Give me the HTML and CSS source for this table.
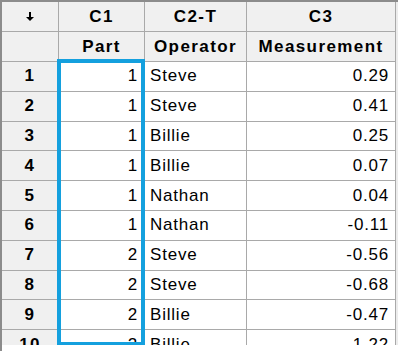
FILE: index.html
```html
<!DOCTYPE html>
<html>
<head>
<meta charset="utf-8">
<link rel="stylesheet" href="styles.css">
</head>
<body>
<div class="frame">
  <div class="view">
    <div class="sheet">
      <div class="cell hdr corner"><svg class="arrow" width="8" height="9" viewBox="0 0 8 9"><path d="M3 0h2v5h3L4 9 0 5h3z" fill="#000"/></svg></div>
      <div class="cell hdr">C1</div>
      <div class="cell hdr">C2-T</div>
      <div class="cell hdr">C3</div>

      <div class="cell hdr"></div>
      <div class="cell hdr">Part</div>
      <div class="cell hdr">Operator</div>
      <div class="cell hdr">Measurement</div>

      <div class="cell rh">1</div><div class="cell num">1</div><div class="cell txt">Steve</div><div class="cell num">0.29</div>
      <div class="cell rh">2</div><div class="cell num">1</div><div class="cell txt">Steve</div><div class="cell num">0.41</div>
      <div class="cell rh">3</div><div class="cell num">1</div><div class="cell txt">Billie</div><div class="cell num">0.25</div>
      <div class="cell rh">4</div><div class="cell num">1</div><div class="cell txt">Billie</div><div class="cell num">0.07</div>
      <div class="cell rh">5</div><div class="cell num">1</div><div class="cell txt">Nathan</div><div class="cell num">0.04</div>
      <div class="cell rh">6</div><div class="cell num">1</div><div class="cell txt">Nathan</div><div class="cell num">-0.11</div>
      <div class="cell rh">7</div><div class="cell num">2</div><div class="cell txt">Steve</div><div class="cell num">-0.56</div>
      <div class="cell rh">8</div><div class="cell num">2</div><div class="cell txt">Steve</div><div class="cell num">-0.68</div>
      <div class="cell rh">9</div><div class="cell num">2</div><div class="cell txt">Billie</div><div class="cell num">-0.47</div>
      <div class="cell rh">10</div><div class="cell num">2</div><div class="cell txt">Billie</div><div class="cell num">1.22</div>
    </div>
    <div class="highlight"></div>
  </div>
</div>
</body>
</html>
```

FILE: styles.css
```css
html, body {
  margin: 0;
  padding: 0;
  background: #ffffff;
}

.frame {
  width: 398px;
  height: 351px;
  box-sizing: border-box;
  border-left: 2px solid #8c8c8c;
  background: #ffffff;
}

.view {
  position: relative;
  height: 345px;
  overflow: hidden;
  box-sizing: border-box;
  border-top: 2px solid #8c8c8c;
  background: #ececec;
}

.sheet {
  display: grid;
  grid-template-columns: 57px 86px 102px 149px;
  grid-template-rows: 30px 30px repeat(10, 29.8px);
  font-family: "Liberation Sans", Arial, sans-serif;
  font-size: 17px;
  color: #000;
}

.cell {
  box-sizing: border-box;
  border-right: 1px solid #a9a9a9;
  border-bottom: 1px solid #a9a9a9;
  background: #fff;
  display: flex;
  align-items: center;
  white-space: nowrap;
  letter-spacing: 0.8px;
}

.hdr, .rh {
  background: #f0f0f0;
  font-weight: bold;
  justify-content: center;
  letter-spacing: 1.4px;
}

.num {
  justify-content: flex-end;
  padding-right: 6px;
}

.txt {
  justify-content: flex-start;
  padding-left: 5px;
}

.arrow {
  display: block;
}

.highlight {
  position: absolute;
  left: 55px;
  top: 57px;
  width: 88px;
  height: 287px;
  box-sizing: border-box;
  border: 4px solid #14a0de;
}
```
